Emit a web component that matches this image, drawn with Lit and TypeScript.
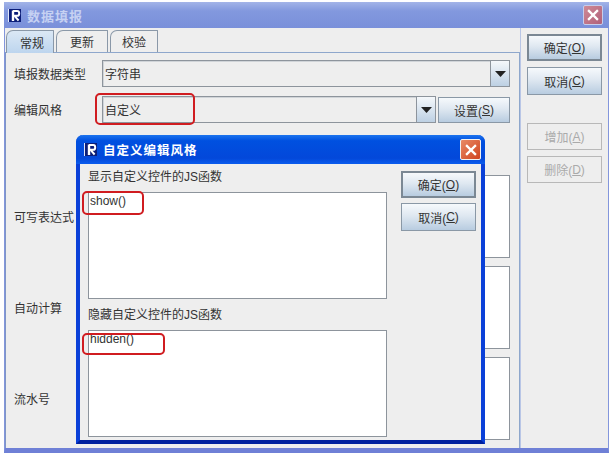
import { LitElement, html, css, svg } from "lit";
import { customElement } from "lit/decorators.js";

const logo = html`<svg class="logo" width="13" height="13" viewBox="0 0 13 13">
  <rect width="13" height="13" fill="#0b1d78"/>
  <rect x="0" y="0" width="1" height="13" fill="#dfe6fa"/>
  ${svg`<path d="M5 2h4.2q2 0 2 2.4t-2 2.4H6.5L10.6 11.5" fill="none" stroke="#fff" stroke-width="2"/><path d="M5 1.5v10.5" stroke="#fff" stroke-width="2.4"/>`}
</svg>`;

const closeX = html`<svg viewBox="0 0 20 20" width="14" height="14">
  <path d="M3 3L17 17M17 3L3 17" stroke="#fff" stroke-width="3.2" fill="none"/>
</svg>`;

const arrow = html`<svg width="11" height="6" viewBox="0 0 11 6"><path d="M0 0H11L5.5 6Z" fill="#222"/></svg>`;

const btnLabel = (t: string, k: string) => html`${t}(<u>${k}</u>)`;

@customElement("app-root")
export class AppRoot extends LitElement {
  static styles = css`
    :host {
      display: block;
      width: 612px;
      height: 456px;
      background: #fff;
      box-sizing: border-box;
      padding: 2px 3px 3px 4px;
      font-family: "Liberation Sans", "Noto Sans CJK SC", sans-serif;
      font-size: 12px;
      color: #333;
      overflow: hidden;
    }
    .win {
      position: relative;
      height: 100%;
      display: flex;
      flex-direction: column;
      background: #eeeeee;
      border-left: 1px solid #8396dc;
      border-right: 1px solid #8396dc;
      border-bottom: 5px solid #6f80d6;
      box-sizing: border-box;
    }
    .title {
      height: 26px;
      margin: 0 -1px;
      flex: none;
      display: flex;
      align-items: center;
      padding: 0 6px 0 4px;
      gap: 6px;
      background: linear-gradient(#a3b4e8, #8298de 35%, #7a90da);
      color: #c6d1f2;
      font-weight: bold;
      font-size: 13px;
      letter-spacing: 1px;
    }
    .title span { flex: 1; }
    .close {
      width: 20px;
      height: 20px;
      box-sizing: border-box;
      display: flex;
      align-items: center;
      justify-content: center;
      border-radius: 2px;
      border: 1px solid #c6cdea;
      background: linear-gradient(135deg, #cf8a96, #b0607a);
    }
    .main {
      flex: 1;
      display: flex;
      min-height: 0;
    }
    .left {
      width: 515px;
      flex: none;
      display: flex;
      flex-direction: column;
    }
    .tabs {
      height: 24px;
      flex: none;
      display: flex;
      padding: 2px 0 0 1px;
      box-sizing: border-box;
      gap: 2px;
    }
    .tab {
      width: 52px;
      display: flex;
      align-items: center;
      justify-content: center;
      box-sizing: border-box;
      background: #eeeeee;
      border: 1px solid #8a98a8;
      border-bottom: none;
      border-radius: 7px 1px 0 0;
    }
    .tab.last { width: 48px; }
    .tab.on {
      width: 48px;
      padding-left: 4px;
      background: linear-gradient(#dbe8f5, #bdd5ee);
      margin-bottom: -1px;
      position: relative;
      z-index: 1;
    }
    .panel {
      flex: 1;
      border: 1px solid #8ea7cc;
      border-bottom: none;
      border-left-color: #7f96c6;
      box-sizing: border-box;
      padding: 7px 9px 6px 8px;
      display: grid;
      grid-template-columns: 88px 1fr;
      grid-template-rows: 27px 28px 36px 83px 83px 83px;
      row-gap: 8px;
      align-items: center;
    }
    .spacer { grid-column: 1 / 3; }
    .combo {
      display: flex;
      height: 27px;
      box-sizing: border-box;
      border: 1px solid #8d949c;
      box-shadow: inset 1px 1px 0 #d0d4d8;
      background: #eeeeee;
      align-items: center;
      padding-left: 2px;
    }
    .combo span { flex: 1; }
    .drop {
      width: 18px;
      height: 100%;
      flex: none;
      display: flex;
      align-items: center;
      justify-content: center;
      border-left: 1px solid #8d949c;
      background: linear-gradient(#f5f8fb, #bdd0e3);
    }
    .row {
      display: flex;
      gap: 2px;
      align-items: flex-end;
      align-self: end;
    }
    .row .combo { flex: 1; }
    .btn {
      display: flex;
      align-items: center;
      justify-content: center;
      box-sizing: border-box;
      height: 28px;
      width: 75px;
      border: 1px solid #8a98a6;
      background: linear-gradient(#f6f9fc, #dfe8f1 45%, #b8cce0);
      flex: none;
    }
    .btn.def {
      height: 27px;
      border: 2px solid #7b8894;
    }
    .btn.off {
      background: #eeeeee;
      border-color: #b8b8b8;
      color: #aaaaaa;
      height: 27px;
    }
    .btn.set { width: 72px; height: 26px; }
    .area {
      background: #fff;
      border: 1px solid #8d949c;
      box-sizing: border-box;
      height: 83px;
    }
    .side {
      flex: 1;
      display: flex;
      flex-direction: column;
      gap: 6px;
      padding: 6px 0 0 6px;
      border-left: 1px solid #b9c6e6;
    }
    .side .gap { height: 16px; }
    .dlg {
      position: absolute;
      left: 71px;
      top: 133px;
      width: 409px;
      height: 309px;
      display: flex;
      flex-direction: column;
      box-sizing: border-box;
      background: #eeeeee;
      border-left: 4px solid #0a40d8;
      border-right: 4px solid #0a40d8;
      border-bottom: 4px solid #00209e;
      border-radius: 7px 7px 0 0;
    }
    .dlg .title {
      margin: 0 -4px;
      height: 29px;
      flex: none;
      border-radius: 7px 7px 0 0;
      background: linear-gradient(#1c74ee, #0050e0 20%, #0348da 80%, #0a5cee);
      color: #fff;
      padding: 0 4px 0 8px;
      font-size: 12.5px;
      gap: 6px;
    }
    .dlg .close {
      width: 21px;
      height: 21px;
      border-color: #f1f1f1;
      background: linear-gradient(135deg, #e88a66, #d0431f);
    }
    .dbody {
      flex: 1;
      display: flex;
      padding: 5px 5px 3px 8px;
      gap: 14px;
      min-height: 0;
    }
    .fields {
      width: 300px;
      display: flex;
      flex-direction: column;
    }
    .fields label {
      height: 23px;
      line-height: 16px;
      flex: none;
    }
    .fields .ta + label { margin-top: 8px; }
    .ta {
      background: #fff;
      border: 1px solid #8d949c;
      height: 107px;
      flex: none;
      box-sizing: border-box;
      padding: 1px 0 0 1px;
      line-height: 14px;
      font-size: 12px;
    }
    .dbtns {
      display: flex;
      flex-direction: column;
      gap: 5px;
      margin-top: 2px;
    }
    .mark {
      position: absolute;
      box-sizing: border-box;
      border: 2px solid #d01c20;
      border-radius: 5px;
    }
    .m1 { left: 90px; top: 91px; width: 100px; height: 32px; }
    .m2 { left: 77px; top: 189px; width: 62px; height: 24px; }
    .m3 { left: 77px; top: 331px; width: 83px; height: 22px; }
  `;

  render() {
    return html`
      <div class="win">
        <div class="title">${logo}<span>数据填报</span><div class="close">${closeX}</div></div>
        <div class="main">
          <div class="left">
            <div class="tabs">
              <div class="tab on">常规</div>
              <div class="tab">更新</div>
              <div class="tab last">校验</div>
            </div>
            <div class="panel">
              <div>填报数据类型</div>
              <div class="combo"><span>字符串</span><div class="drop">${arrow}</div></div>
              <div>编辑风格</div>
              <div class="row">
                <div class="combo"><span>自定义</span><div class="drop">${arrow}</div></div>
                <div class="btn set">${btnLabel("设置", "S")}</div>
              </div>
              <div class="spacer"></div>
              <div>可写表达式</div>
              <div class="area"></div>
              <div>自动计算</div>
              <div class="area"></div>
              <div>流水号</div>
              <div class="area"></div>
            </div>
          </div>
          <div class="side">
            <div class="btn def">${btnLabel("确定", "O")}</div>
            <div class="btn">${btnLabel("取消", "C")}</div>
            <div class="gap"></div>
            <div class="btn off">${btnLabel("增加", "A")}</div>
            <div class="btn off">${btnLabel("删除", "D")}</div>
          </div>
        </div>
        <div class="dlg">
          <div class="title">${logo}<span>自定义编辑风格</span><div class="close">${closeX}</div></div>
          <div class="dbody">
            <div class="fields">
              <label>显示自定义控件的JS函数</label>
              <div class="ta">show()</div>
              <label>隐藏自定义控件的JS函数</label>
              <div class="ta">hidden()</div>
            </div>
            <div class="dbtns">
              <div class="btn def">${btnLabel("确定", "O")}</div>
              <div class="btn">${btnLabel("取消", "C")}</div>
            </div>
          </div>
        </div>
        <div class="mark m1"></div>
        <div class="mark m2"></div>
        <div class="mark m3"></div>
      </div>
    `;
  }
}
